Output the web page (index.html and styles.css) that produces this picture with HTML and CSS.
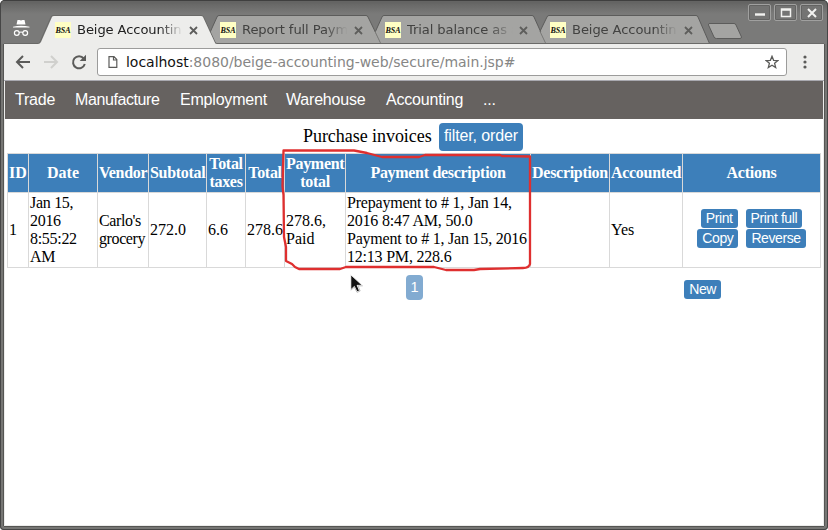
FILE: index.html
```html
<!DOCTYPE html>
<html lang="en">
<head>
<meta charset="utf-8">
<title>Beige Accounting</title>
<link rel="stylesheet" href="styles.css">
</head>
<body>
<div class="window">
  <header class="titlebar">
    <svg class="frame" width="828" height="44" viewBox="0 0 828 44">
      <g fill="#a4a4a2" stroke="#5c5c5b">
        <path d="M534 43.5 L547 17 Q547.5 15.5 549 15.5 H696 Q697.5 15.5 698 17 L709.500 43.500Z"/>
        <path d="M370 43.5 L382 17 Q382.5 15.5 384 15.500 H532 Q533.500 15.500 534 17 L546 43.500Z"/>
        <path d="M205 43.500 L217 17 Q217.500 15.500 219 15.500 H366 Q367.500 15.500 368 17 L381 43.500Z"/>
        <path d="M709 23.500 H734 Q735.500 23.500 736 25 L741.500 37 Q741.500 38.500 740 38.500 H716.500 Q714.500 38.500 714 37 L708.500 25 Q708.500 23.500 709 23.500Z"/>
      </g>
      <path d="M374.800 32 L384 32 V43 H380Z M539.800 32 L549 32 V43 H545Z" fill="#a4a4a2"/>
      <path d="M374.800 31 L380.500 43 M539.800 31 L545.500 43" stroke="#7a7a78" fill="none"/>
      <path d="M4 43.500 H38 Q39.500 43.500 40 42 L51 17 Q51.500 15.500 53 15.500 H201 Q203 15.500 203.500 17 L215 42 Q215.500 43.500 217 43.500 H824" fill="none" stroke="#6a6a68"/>
      <path d="M38 44 Q40 44 41 42 L52 17 Q52.500 16 54 16 H201 Q202.500 16 203 17 L214.500 42 Q215 44 217 44Z" fill="#ededeb"/>
      <g fill="#fff">
        <path d="M17.500 20 H19.500 L21 20.500 22.500 20 H24.500 L25.500 24.500 H16.500Z"/>
        <path d="M13 26.700 Q21 24.800 29.500 26.700 V27.500 H13Z"/>
      </g>
      <g fill="none" stroke="#fff" stroke-width="1.200"><circle cx="16.800" cy="33" r="2.400"/><circle cx="25.200" cy="33" r="2.400"/><path d="M19.200 32.500 Q21 31.500 22.800 32.500"/></g>
    </svg>
    <div class="tabs">
      <div class="tab active"><i class="favicon">BSA</i><span class="label">Beige Accountin</span><svg class="close" viewBox="0 0 9 9"><path d="M1 1 8 8M8 1 1 8"/></svg></div>
      <div class="tab"><i class="favicon">BSA</i><span class="label">Report full Payme</span><svg class="close" viewBox="0 0 9 9"><path d="M1 1 8 8M8 1 1 8"/></svg></div>
      <div class="tab"><i class="favicon">BSA</i><span class="label">Trial balance as a</span><svg class="close" viewBox="0 0 9 9"><path d="M1 1 8 8M8 1 1 8"/></svg></div>
      <div class="tab"><i class="favicon">BSA</i><span class="label">Beige Accountin</span><svg class="close" viewBox="0 0 9 9"><path d="M1 1 8 8M8 1 1 8"/></svg></div>
    </div>
    <div class="controls">
      <span class="control"><svg viewBox="0 0 12 12"><path d="M1 7.500H11" stroke-width="2.400"/></svg></span>
      <span class="control"><svg viewBox="0 0 12 12"><path d="M1.500 2H10.500V9.500H1.500ZM1.500 3H10.500"/></svg></span>
      <span class="control"><svg viewBox="0 0 12 12"><path d="M2 2 10 10M10 2 2 10" stroke-width="2"/></svg></span>
    </div>
  </header>
  <div class="toolbar">
    <svg class="tool-icons" viewBox="0 0 90 36" width="90" height="36">
      <g fill="none" stroke-width="2"><path d="M26 18H13.500M19 12 13 18 19 24" stroke="#5b5b59"/><path d="M40 18H52.500M47 12 53 18 47 24" stroke="#d0d0cd"/><path d="M79.700 14.500A6 6 0 1 0 80.800 20" stroke="#5b5b59"/></g>
      <path d="M82 10.700V17H75.700Z" fill="#5b5b59"/>
    </svg>
    <div class="address">
      <svg class="page-icon" width="10" height="12" viewBox="0 0 10 12"><path d="M1 .7H6L8.800 3.500V11.300H1ZM5.500 1V4H8.500" fill="none" stroke="#5b5b59" stroke-width="1.200"/></svg>
      <span class="url"><b>localhost</b>:8080/beige-accounting-web/secure/main.jsp#</span>
      <svg width="14" height="14" viewBox="0 0 14 14"><path d="M7 1.300 8.600 5.300 12.900 5.600 9.600 8.300 10.700 12.500 7 10.200 3.300 12.500 4.400 8.300 1.100 5.600 5.400 5.300Z" fill="none" stroke="#5b5b59" stroke-width="1.300"/></svg>
    </div>
    <svg class="menu" width="4" height="14" viewBox="0 0 4 14"><g fill="#5b5b59"><circle cx="2" cy="2" r="1.600"/><circle cx="2" cy="7" r="1.600"/><circle cx="2" cy="12" r="1.600"/></g></svg>
  </div>
  <main class="page">
    <nav class="nav"><a>Trade</a><a class="tight">Manufacture</a><a>Employment</a><a>Warehouse</a><a>Accounting</a><a>...</a></nav>
    <div class="heading"><span>Purchase invoices</span><button class="btn large">filter, order</button></div>
    <table class="invoices">
      <colgroup><col class="c-id"><col class="c-date"><col class="c-vendor"><col class="c-sub"><col class="c-tax"><col class="c-tax"><col class="c-pay"><col class="c-paydesc"><col class="c-desc"><col class="c-acc"><col class="c-act"></colgroup>
      <thead><tr><th>ID</th><th>Date</th><th>Vendor</th><th>Subtotal</th><th>Total<br>taxes</th><th>Total</th><th>Payment<br>total</th><th>Payment description</th><th>Description</th><th>Accounted</th><th>Actions</th></tr></thead>
      <tbody><tr><td>1</td><td class="date">Jan 15,<br>2016<br>8:55:22<br>AM</td><td class="tight">Carlo's<br>grocery</td><td>272.0</td><td>6.6</td><td>278.6</td><td>278.6,<br>Paid</td><td class="payments">Prepayment to # 1, Jan 14,<br>2016 8:47 AM, 50.0<br>Payment to # 1, Jan 15, 2016<br>12:13 PM, 228.6</td><td></td><td>Yes</td>
        <td><div class="actions"><div class="pair"><button class="btn">Print</button><button class="btn">Print full</button></div><div class="pair"><button class="btn">Copy</button><button class="btn">Reverse</button></div></div></td></tr></tbody>
    </table>
    <div class="pager"><button class="btn current">1</button><button class="btn new">New</button></div>
  </main>
  <svg class="marker" width="828" height="530" viewBox="0 0 828 530">
    <path d="M283.500 150.500 H354 L367 153 382 157 H419 L425 155 H500 L502 156 530 156.500 V264 Q529 268 523 268 L480 269 474 270 H446 L434 267 H346 L340 269 H299 L295 267 292 264 286 261 V247 L284 237 283.500 195 282.500 186Z" fill="none" stroke="#df2f2f" stroke-width="2.300" stroke-linejoin="round"/>
  </svg>
  <svg class="cursor" width="13" height="20" viewBox="0 0 13 20"><path d="M.6 .8V15L4 11.800 6.500 17 8.900 16 6.600 10.800H11.500Z" fill="#111" stroke="#fff" stroke-width=".8"/><path d="M.6 15.500 4 12.500 6.500 17.500 9.500 16.200 7.500 11.300H12" fill="none" stroke="#aaa" stroke-width=".7"/></svg>
</div>
</body>
</html>
```
FILE: styles.css
```css
* { box-sizing: border-box; }
body { margin: 0; background: #fff; }
.window {
  position: relative; width: 828px; height: 530px; overflow: hidden;
  background: #767674; border-radius: 5px 5px 4px 4px;
  display: flex; flex-direction: column;
  box-shadow: inset 0 0 0 1px #464646;
}
.titlebar {
  position: relative; flex: none; height: 44px; display: flex; justify-content: space-between;
  background: linear-gradient(#3f3f3f 0, #3f3f3f 1px, #646463 1px, #646463 3px, #686867 4px, #7a7a79 14px, #7a7a79 100%);
  border-radius: 5px 5px 0 0;
  box-shadow: inset 1px 0 #464646, inset -1px 0 #464646;
}
.frame { position: absolute; left: 0; top: 0; }
.tabs { display: flex; padding: 22px 0 0 55px; position: relative; }
.tab { width: 165px; height: 16px; display: flex; align-items: center; color: #424241; font: 13.1px/16px "DejaVu Sans", sans-serif; letter-spacing: -.1px; }
.tab.active { color: #222; }
.favicon { width: 16px; height: 16px; flex: none; background: #ffffc4; color: #111; font: italic bold 8px/17px "Liberation Serif", serif; letter-spacing: 0; text-align: center; }
.label { width: 109px; margin-left: 6px; overflow: hidden; white-space: nowrap; -webkit-mask-image: linear-gradient(90deg, #000 76%, transparent 97%); mask-image: linear-gradient(90deg, #000 76%, transparent 97%); }
.close { width: 9px; height: 9px; margin-left: 3px; fill: none; stroke: #5e5e5c; stroke-width: 1.8; }
.controls { position: relative; display: flex; gap: 3px; padding: 4px 5px 0 0; }
.control { width: 23px; height: 17px; border: 1px solid #a0a09f; border-radius: 2px; display: flex; align-items: center; justify-content: center; background: #747473; box-shadow: inset 0 0 0 1px #636362; }
.control svg { width: 12px; height: 12px; fill: none; stroke: #f2f2f0; stroke-width: 1.5; }
.toolbar {
  flex: none; height: 37px; margin: 0 4px; display: flex; align-items: center;
  background: #ededeb; border-bottom: 1px solid #a9a9b0; padding-right: 17px;
  box-shadow: -1px 0 #555553, 1px 0 #555553;
}
.tool-icons { flex: none; }
.address { width: 690px; height: 28px; margin-left: 3px; border: 1px solid #9c9c9b; border-radius: 3px; background: #fff; display: flex; align-items: center; padding: 0 7px 0 10px; }
.url { flex: 1; margin-left: 8px; color: #868685; font: 14px/20px "DejaVu Sans", sans-serif; letter-spacing: -.02px; white-space: nowrap; }
.url b { color: #111; font-weight: normal; }
.menu { margin-left: auto; }
.page { flex: 1; margin: 0 4px 4px; border: solid #ececeb; border-width: 0 1px 1px; background: #fff; font: 16px/18px "Liberation Serif", serif; color: #000; box-shadow: 0 1px #555553, -1px 0 #555553, 1px 0 #555553; }
.nav { height: 38px; display: grid; grid-template-columns: 60px 105px 106px 100px 97px auto; align-items: center; padding: 0 10px; background: #666260; color: #fff; font: 16px/18px "Liberation Sans", sans-serif; letter-spacing: -.2px; }
.tight { letter-spacing: -.4px; }
.heading { display: flex; align-items: center; gap: 7px; height: 28px; margin: 4px 0 2px 298px; font-size: 18px; }
.heading span { width: 129px; white-space: nowrap; letter-spacing: -.05px; padding-bottom: 2px; }
.btn { margin: 0; border: 0; border-radius: 3px; background: #3d7fba; color: #fff; font: 14px/19px "Liberation Sans", sans-serif; letter-spacing: -.4px; padding: 0 5px; height: 19px; white-space: nowrap; }
.btn.large { font-size: 16px; line-height: 26px; height: 28px; border-radius: 4px; letter-spacing: -.12px; padding-bottom: 2px; }
.invoices { width: 814px; margin-left: 2px; table-layout: fixed; border-collapse: collapse; }
.invoices th, .invoices td { border: 1px solid #d9d9d9; padding: 1px; white-space: nowrap; text-align: left; }
.invoices th { background: #3d7fba; color: #fff; text-align: center; height: 39px; letter-spacing: -.3px; }
.invoices th:nth-child(-n+2) { letter-spacing: 0; }
.invoices th:last-child { letter-spacing: -.2px; }
.invoices td { height: 75px; }
.invoices .date { letter-spacing: -.3px; }
.payments { letter-spacing: -.21px; }
.c-id { width: 21px; } .c-date { width: 69px; } .c-vendor { width: 51px; } .c-sub { width: 58px; }
.c-tax { width: 39px; } .c-pay { width: 61px; } .c-paydesc { width: 185px; } .c-desc { width: 79px; }
.c-acc { width: 73px; } .c-act { width: 138px; }
.actions { display: flex; flex-direction: column; gap: 1px; padding-bottom: 3px; }
.pair { display: flex; justify-content: center; gap: 8px; }
.pager { display: flex; align-items: center; padding: 7px 102px 0 401px; justify-content: space-between; }
.btn.current { background: #82abd1; height: 25px; width: 17px; font-size: 14.5px; line-height: 25px; border-radius: 4px; padding: 0; letter-spacing: 0; }
.btn.new { margin-top: 4px; }
.marker { position: absolute; left: 0; top: 0; }
.cursor { position: absolute; left: 350px; top: 274px; width: 14px; height: 21px; }
```
